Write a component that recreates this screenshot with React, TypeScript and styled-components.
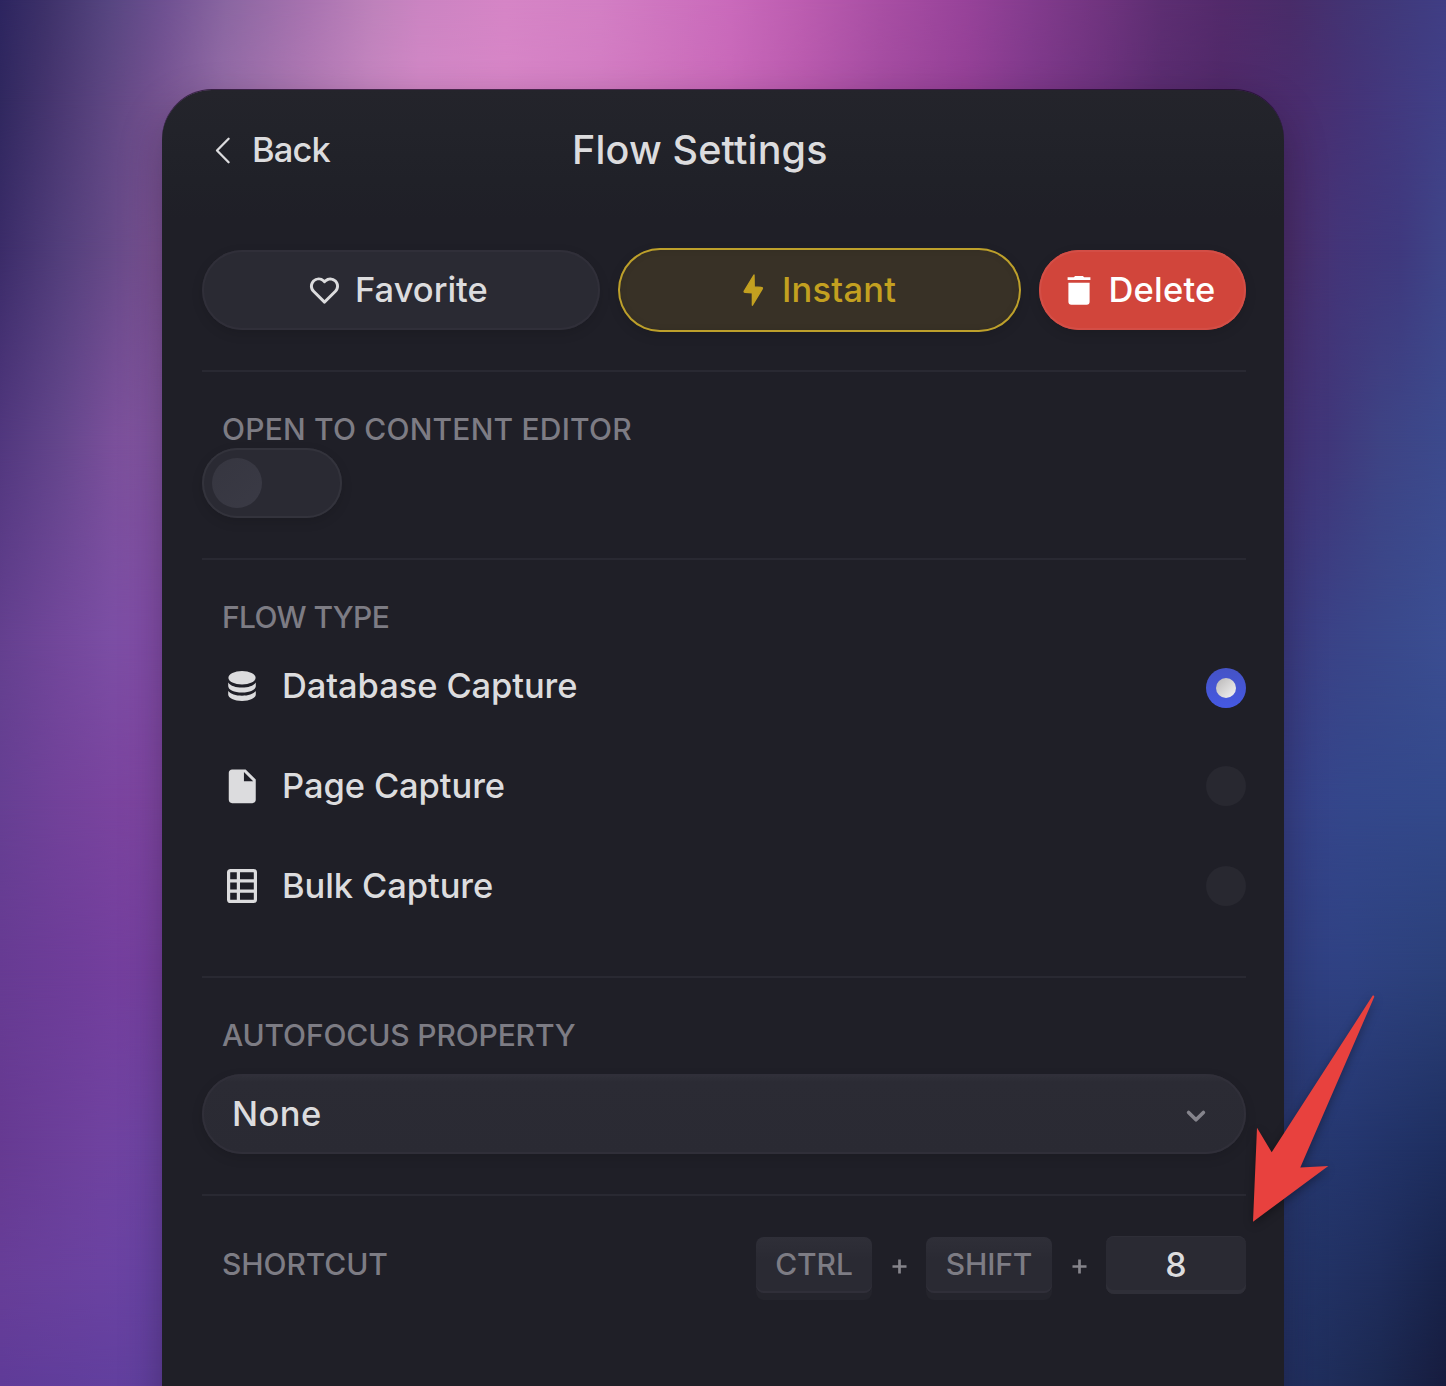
import React, { useState } from 'react';
import styled, { createGlobalStyle, css } from 'styled-components';
import { BiHeart } from 'react-icons/bi';
import { MdInsertDriveFile } from 'react-icons/md';

const GlobalStyle = createGlobalStyle`
  * { box-sizing: border-box; }
  body { margin: 0; }
  button, input { font: inherit; color: inherit; letter-spacing: inherit; border: 0; background: none; padding: 0; margin: 0; }
`;

const color = {
  text: '#dcdcde',
  muted: '#7d7c84',
  surface: '#2a2a33',
  edge: '#302f39',
  gold: '#c3a020',
  red: '#d1453b',
};

/* ---------- wallpaper ---------- */

type Band = { y: number; stops: string };

const bands: Band[] = [
  { y: 0, stops: '#2d2560 0px, #3d3169 45px, #574681 110px, #6f5192 165px, #8a66a1 226px, #a873b0 309px, #be82bb 374px, #cb84c2 422px, #d685c6 505px, #d37fc4 600px, #cf76c0 656px, #ca6abb 730px, #bc5db0 803px, #a94fa4 880px, #98439a 965px, #843c8e 1030px, #70347f 1102px, #5d2e72 1162px, #532a6b 1222px, #492c69 1290px, #433474 1350px, #403a7c 1400px, #403e85 1446px' },
  { y: 100, stops: '#30285f 0px, #46356f 50px, #5b4480 100px, #71508e 150px, #936ba6 221px, #b079b4 304px, #c585c0 369px, #d288c6 420px, #d785c7 505px, #d37cc3 600px, #cf74be 656px, #c868b9 730px, #b95aae 803px, #a44ca1 880px, #944096 965px, #7f398b 1030px, #6c327d 1102px, #5a2c70 1162px, #502969 1222px, #4a2d6f 1300px, #443479 1360px, #404087 1446px' },
  { y: 250, stops: '#3b2c69 0px, #523e7b 60px, #654987 110px, #7c5394 155px, #4b2f6d 1290px, #433579 1340px, #3f397e 1400px, #3f4589 1446px' },
  { y: 440, stops: '#51377e 0px, #64468c 60px, #7b509b 115px, #8456a2 155px, #46357a 1290px, #40377a 1330px, #3e4384 1380px, #3c4a8d 1446px' },
  { y: 640, stops: '#64408f 0px, #72479b 60px, #7b4ea4 110px, #844ea9 155px, #3c3d84 1290px, #3a4488 1340px, #3a4a8d 1400px, #3b4e92 1446px' },
  { y: 800, stops: '#663f93 0px, #72429a 60px, #7b449f 120px, #8147a4 155px, #37428a 1290px, #34478b 1350px, #33498b 1446px' },
  { y: 970, stops: '#673b93 0px, #6f3d9a 80px, #7841a1 155px, #314083 1290px, #2f4283 1350px, #2b4079 1446px' },
  { y: 1150, stops: '#663a92 0px, #6f429f 100px, #7045a5 155px, #273970 1290px, #24366e 1350px, #1e2e5f 1446px' },
  { y: 1280, stops: '#673e98 0px, #6a42a1 100px, #6944a5 155px, #243569 1290px, #1f2d5c 1380px, #18234a 1446px' },
  { y: 1386, stops: '#5f3b98 0px, #6341a0 155px, #223162 1290px, #1b2850 1380px, #171c3e 1446px' },
];

const Desktop = styled.main`
  position: relative;
  width: 1446px;
  height: 1386px;
  padding: 90px 162px 0;
  overflow: hidden;
  font-family: Inter, "Liberation Sans", sans-serif;
  font-weight: 500;
  color: ${color.text};
`;

const WallpaperBand = styled.div<{ $stops: string; $from: number; $to: number }>`
  position: absolute;
  inset: 0;
  background: linear-gradient(to right, ${p => p.$stops});
  ${p => p.$to > 0 && css`mask-image: linear-gradient(to bottom, transparent ${p.$from}px, #000 ${p.$to}px);`}
`;

/* ---------- panel ---------- */

const Panel = styled.section`
  position: relative;
  height: 1340px;
  padding: 0 38px 0 40px;
  border-radius: 50px 50px 0 0;
  background: linear-gradient(to bottom, #24242b 0, #22232a 40px, #202128 90px, #1f1f27 130px);
  box-shadow: 0 -1px 0 rgba(30, 10, 40, 0.75), 0 16px 40px rgba(20, 10, 30, 0.36);
`;

const Header = styled.header`
  display: flex;
  align-items: center;
  height: 120px;
`;

const Caption = styled.span`
  padding-bottom: 2px;
`;

const BackButton = styled.button`
  display: flex;
  align-items: center;
  gap: 18px;
  width: 370px;
  padding-left: 12px;
  font-size: 34.5px;
  letter-spacing: -0.9px;
`;

const Title = styled.h1`
  margin: 0;
  font-size: 39.5px;
  font-weight: 550;
  letter-spacing: 0.15px;
  white-space: nowrap;
`;

const Actions = styled.div`
  display: flex;
  align-items: center;
  gap: 18px;
  height: 84px;
  margin: 38px 0;
`;

const Pill = styled.button<{ $tone?: 'gold' | 'red'; $width: number; $inset: number; $gap: number; $spacing: number }>`
  display: flex;
  align-items: center;
  flex: none;
  gap: ${p => p.$gap}px;
  width: ${p => p.$width}px;
  height: 80px;
  padding: 0 0 0 ${p => p.$inset}px;
  border-radius: 42px;
  font-size: 34.5px;
  letter-spacing: ${p => p.$spacing}px;
  background: ${color.surface};
  box-shadow: inset 0 0 0 2px ${color.edge}, 0 4px 12px rgba(0, 0, 0, 0.12);
  ${p => p.$tone === 'gold' && css`
    height: 84px;
    color: ${color.gold};
    background: #383126;
    box-shadow: inset 0 0 0 2px #bda02b, inset 0 0 8px rgba(0, 0, 0, 0.15), 0 4px 12px rgba(0, 0, 0, 0.12);
  `}
  ${p => p.$tone === 'red' && css`
    color: #fff;
    background: ${color.red};
    box-shadow: inset 0 0 0 2px #d34e46, 0 4px 12px rgba(0, 0, 0, 0.12);
  `}
`;

const Divider = styled.hr`
  height: 2px;
  margin: 0;
  border: 0;
  background: #292932;
`;

const Section = styled.div<{ $bottom: number }>`
  padding: 38px 0 ${p => p.$bottom}px;
`;

const Label = styled.div<{ $spacing: number }>`
  height: 38px;
  padding-left: 20px;
  font-size: 30px;
  line-height: 39px;
  letter-spacing: ${p => p.$spacing}px;
  color: ${color.muted};
`;

const Toggle = styled.button<{ $on: boolean }>`
  display: flex;
  align-items: center;
  justify-content: ${p => (p.$on ? 'flex-end' : 'flex-start')};
  width: 140px;
  height: 70px;
  padding: 0 10px;
  border-radius: 35px;
  background: ${color.surface};
  box-shadow: inset 0 0 0 2px #33333c, 0 4px 12px rgba(0, 0, 0, 0.12);
`;

const Knob = styled.span`
  width: 50px;
  height: 50px;
  border-radius: 50%;
  background: linear-gradient(135deg, #363640, #3a3a45);
`;

const Option = styled.button`
  display: flex;
  align-items: center;
  width: 100%;
  height: 100px;
  padding-left: 20px;
  font-size: 34.5px;
  letter-spacing: -0.1px;
`;

const OptionIcon = styled.span`
  display: grid;
  place-items: center;
  width: 40px;
  height: 42px;
  margin-right: 20px;
`;

const OptionName = styled.span`
  flex: 1;
  padding-bottom: 2px;
  text-align: left;
`;

const Radio = styled.span<{ $checked: boolean }>`
  display: grid;
  place-items: center;
  width: 40px;
  height: 40px;
  border-radius: 50%;
  background: #282830;
  ${p => p.$checked && css`
    margin-top: 4px;
    background: linear-gradient(to bottom, #4553c6, #4559e2);
    &::after {
      content: '';
      width: 20px;
      height: 20px;
      border-radius: 50%;
      background: linear-gradient(135deg, #b9b7b6, #f4f4f6);
    }
  `}
`;

const Select = styled.button`
  display: flex;
  align-items: center;
  justify-content: space-between;
  width: 100%;
  height: 80px;
  margin-top: 20px;
  padding: 0 37px 0 30px;
  border-radius: 40px;
  font-size: 34.5px;
  letter-spacing: 0.4px;
  background: linear-gradient(to bottom, #31313a 0, #2b2b34 8px, #2a2a33 100%);
  box-shadow: inset 0 0 0 2px ${color.edge}, 0 4px 12px rgba(0, 0, 0, 0.12);
`;

const SelectChevron = styled.svg`
  margin-top: 4px;
`;

const ShortcutRow = styled.div`
  display: flex;
  align-items: flex-start;
  justify-content: space-between;
  padding-top: 40px;
`;

const ShortcutLabel = styled(Label)`
  height: 58px;
  line-height: 57px;
`;

const Keys = styled.div`
  display: flex;
  align-items: center;
  height: 58px;
`;

const KeyCap = styled.kbd<{ $width: number }>`
  width: ${p => p.$width}px;
  height: 56px;
  border-radius: 8px;
  font: inherit;
  font-size: 30px;
  line-height: 55px;
  letter-spacing: -0.1px;
  text-align: center;
  color: ${color.muted};
  background: linear-gradient(to bottom, #2f2f38 0, #2a2a33 22px);
  box-shadow: inset 0 -2px 0 #302f39, 0 7px 0 #24242c;
`;

const Plus = styled.svg`
  margin: 3px 19.500px 0;
`;

const KeyInput = styled.input`
  width: 140px;
  height: 58px;
  border-radius: 8px;
  font-size: 34px;
  text-align: center;
  padding-bottom: 1px;
  outline: 0;
  background: ${color.surface};
  box-shadow: inset 0 -4px 0 #2f2f38, inset 0 1px 0 #2e2e37;
`;

const Pointer = styled.svg`
  position: absolute;
  left: 1236px;
  top: 980px;
  overflow: visible;
  filter: drop-shadow(0 3px 5px rgba(0, 0, 0, 0.35));
`;

/* ---------- icons ---------- */

const BackIcon = () => (
  <svg width="20" height="30" viewBox="0 0 20 30" fill="none" stroke="currentColor" strokeWidth="2.3" strokeLinecap="round" strokeLinejoin="round">
    <path d="M14.6 3.7 3 15.500l11.600 11.800" />
  </svg>
);

const BoltIcon = () => (
  <svg width="24" height="34" viewBox="0 0 24 34" fill="currentColor" stroke="currentColor" strokeWidth="1.400" strokeLinejoin="round">
    <path d="M13 2 3.300 18c-.4.8-.1 1.400.8 1.400l7.300.5v12.300L21.200 15.800c.4-.8.1-1.400-.8-1.400L13.200 14Z" />
  </svg>
);

const TrashIcon = () => (
  <svg width="24" height="30" viewBox="0 0 24 30" fill="currentColor">
    <path d="M.6 2.300h6.200L8.100 1h7.800l1.300 1.300h6.200v2.800H.6Z" />
    <path d="M1.400 7.800h21.200v18.900a3 3 0 0 1-3 3H4.400a3 3 0 0 1-3-3Z" />
  </svg>
);

const DatabaseIcon = () => (
  <svg width="40" height="42" viewBox="0 0 40 42" fill="currentColor">
    <ellipse cx="20" cy="12.700" rx="13.600" ry="6.700" />
    <path d="M6.200 17.400c2.400 3.400 7.600 5.200 13.800 5.200s11.400-1.800 13.800-5.200v3.500c0 3.800-6 6.600-13.800 6.600S6.200 24.700 6.200 20.900Z" />
    <path d="M6.200 26.100c2.400 3 7.600 4.700 13.800 4.700s11.400-1.700 13.800-4.700v3.400c0 3.500-6 6.400-13.800 6.400s-13.800-2.900-13.800-6.400Z" />
  </svg>
);

const TableIcon = () => (
  <svg width="40" height="42" viewBox="0 0 40 42" fill="none" stroke="currentColor" strokeWidth="3.200">
    <rect x="6.600" y="5.600" width="26.800" height="30.800" rx="2" />
    <path d="M16.400 5.600v30.800M6.600 15.900h26.800M6.600 26.100h26.800" />
  </svg>
);

const PlusIcon = () => (
  <Plus width="15" height="15" viewBox="0 0 15 15" fill="none" stroke="#85848b" strokeWidth="2.700">
    <path d="M7.500 .5v14M.5 7.500h14" />
  </Plus>
);

const flowTypes = [
  { name: 'Database Capture', icon: <DatabaseIcon /> },
  { name: 'Page Capture', icon: <MdInsertDriveFile size={40.500} /> },
  { name: 'Bulk Capture', icon: <TableIcon /> },
];

export default function App() {
  const [flow, setFlow] = useState('Database Capture');
  const [editor, setEditor] = useState(false);
  const [shortcut, setShortcut] = useState('8');

  return (
    <Desktop>
      <GlobalStyle />
      {bands.map((b, i) => (
        <WallpaperBand key={b.y} $stops={b.stops} $from={i ? bands[i - 1].y : 0} $to={b.y} />
      ))}

      <Panel>
        <Header>
          <BackButton><BackIcon /><Caption>Back</Caption></BackButton>
          <Title>Flow Settings</Title>
        </Header>

        <Actions>
          <Pill $width={398} $inset={105} $gap={13} $spacing={0}><BiHeart size={35} /><Caption>Favorite</Caption></Pill>
          <Pill $tone="gold" $width={403} $inset={123} $gap={17} $spacing={0.2}><BoltIcon /><Caption>Instant</Caption></Pill>
          <Pill $tone="red" $width={207} $inset={27.500} $gap={18} $spacing={0.2}><TrashIcon /><Caption>Delete</Caption></Pill>
        </Actions>
        <Divider />

        <Section $bottom={40}>
          <Label $spacing={0.2}>OPEN TO CONTENT EDITOR</Label>
          <Toggle $on={editor} aria-pressed={editor} onClick={() => setEditor(!editor)}><Knob /></Toggle>
        </Section>
        <Divider />

        <Section $bottom={40}>
          <Label $spacing={-0.65}>FLOW TYPE</Label>
          {flowTypes.map(t => (
            <Option key={t.name} onClick={() => setFlow(t.name)}>
              <OptionIcon>{t.icon}</OptionIcon>
              <OptionName>{t.name}</OptionName>
              <Radio $checked={flow === t.name} />
            </Option>
          ))}
        </Section>
        <Divider />

        <Section $bottom={40}>
          <Label $spacing={-0.15}>AUTOFOCUS PROPERTY</Label>
          <Select>
            <Caption>None</Caption>
            <SelectChevron width="26" height="20" viewBox="0 0 26 20" fill="none" stroke="#85848c" strokeWidth="3.600" strokeLinecap="round" strokeLinejoin="round">
              <path d="M5.600 6.400 13 13.800l7.400-7.400" />
            </SelectChevron>
          </Select>
        </Section>
        <Divider />

        <ShortcutRow>
          <ShortcutLabel $spacing={-0.1}>SHORTCUT</ShortcutLabel>
          <Keys>
            <KeyCap $width={116}>CTRL</KeyCap>
            <PlusIcon />
            <KeyCap $width={126}>SHIFT</KeyCap>
            <PlusIcon />
            <KeyInput value={shortcut} onChange={e => setShortcut(e.target.value)} />
          </Keys>
        </ShortcutRow>
      </Panel>

      <Pointer width="160" height="260" viewBox="1236 980 160 260" fill="#e8413e">
        <path d="M1372.700 995.600Q1374.500 995 1374.200 997L1300.300 1167.600 1328.300 1166 1253 1221.800 1257 1127.700 1271.700 1152.300Z" />
      </Pointer>
    </Desktop>
  );
}
